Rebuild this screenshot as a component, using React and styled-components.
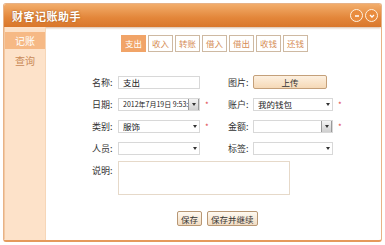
import styled, { createGlobalStyle } from "styled-components";

const GlobalStyle = createGlobalStyle`
  body {
    margin: 0;
    background: #ffffff;
    font-family: "Noto Sans CJK SC", "DejaVu Sans", sans-serif;
  }
`;

const Window = styled.div`
  margin: 3px;
  width: 379px;
  height: 239px;
  box-sizing: border-box;
  border: 1px solid #e7b287;
  border-bottom: 2px solid #e59a5c;
  border-radius: 3px;
  display: flex;
  flex-direction: column;
  overflow: hidden;
  background: #ffffff;
`;

const TitleBar = styled.div`
  height: 23px;
  flex-shrink: 0;
  display: flex;
  align-items: center;
  justify-content: space-between;
  padding: 0 3px 0 8px;
  background: linear-gradient(#f2ad6b, #e3863a 60%, #d9772b);
  box-shadow: 0 1px 2px rgba(150, 80, 20, 0.4);
`;

const Title = styled.span`
  color: #ffffff;
  font-size: 11px;
  font-weight: bold;
  letter-spacing: 0.5px;
  text-shadow: 0 0 2px #9a5016;
`;

const Controls = styled.div`
  display: flex;
  gap: 2px;
`;

const RoundButton = styled.span`
  width: 11px;
  height: 11px;
  border-radius: 50%;
  border: 1px solid #fff2e0;
  background: #e98c3e;
  display: flex;
  align-items: center;
  justify-content: center;
`;

const Body = styled.div`
  flex: 1;
  display: flex;
`;

const Sidebar = styled.div`
  width: 40px;
  flex-shrink: 0;
  background: #fde2c9;
  border-left: 1px solid #f3c9a2;
  border-right: 1px solid #f6d6b8;
  padding-top: 5px;
  display: flex;
  flex-direction: column;
  gap: 3px;
`;

const SideItem = styled.div`
  height: 17px;
  line-height: 17px;
  text-align: center;
  font-size: 10px;
  color: ${(p) => (p.active ? "#ffffff" : "#c98a58")};
  background: ${(p) => (p.active ? "#f6b985" : "transparent")};
`;

const Content = styled.div`
  flex: 1;
  display: flex;
  flex-direction: column;
  padding-top: 8px;
`;

const Tabs = styled.div`
  display: flex;
  gap: 2px;
  margin-left: 75px;
`;

const Tab = styled.div`
  width: 23px;
  height: 15px;
  line-height: 15px;
  text-align: center;
  font-size: 8.5px;
  color: ${(p) => (p.active ? "#ffffff" : "#d68d55")};
  background: ${(p) => (p.active ? "#f1a468" : "#ffffff")};
  border: 1px solid ${(p) => (p.active ? "#f1a468" : "#ceb9a2")};
`;

const Form = styled.div`
  margin-top: 19px;
  margin-left: 46px;
  display: grid;
  grid-template-columns: 26px 82px 28px 25px 80px 10px;
  grid-auto-rows: 22px;
  align-items: center;
`;

const Label = styled.span`
  font-size: 9px;
  color: #333333;
  align-self: ${(p) => (p.top ? "start" : "center")};
  padding-top: ${(p) => (p.top ? "5px" : "0")};
`;

const Field = styled.div`
  height: 13px;
  box-sizing: border-box;
  border: 1px solid #d8d8d8;
  background: #ffffff;
  display: flex;
  align-items: center;
  font-size: 8.5px;
  color: #222222;
  padding-left: 4px;
  overflow: hidden;
  white-space: nowrap;
`;

const FieldText = styled.span`
  flex: 1;
  overflow: hidden;
  font-size: ${(p) => (p.small ? "7px" : "8.5px")};
`;

const Caret = styled.span`
  width: 9px;
  flex-shrink: 0;
  display: flex;
  align-items: center;
  justify-content: center;
  &::after {
    content: "";
    border-left: 2px solid transparent;
    border-right: 2px solid transparent;
    border-top: 3px solid #333333;
  }
`;

const CaretBox = styled(Caret)`
  height: 11px;
  border: 1px solid #9a9a9a;
  border-radius: 1px;
  background: linear-gradient(#f4f4f4, #cfcfcf);
`;

const Star = styled.span`
  color: #e0424a;
  font-size: 8px;
  padding-left: 5px;
`;

const Upload = styled.button`
  width: 74px;
  height: 14px;
  padding: 0;
  border: 1px solid #c4a07a;
  border-radius: 2px;
  background: linear-gradient(#fdf0e0, #f5d9b7);
  font-family: inherit;
  font-size: 8.5px;
  color: #333333;
`;

const TextArea = styled.div`
  grid-column: 2 / 6;
  align-self: start;
  width: 172px;
  height: 34px;
  box-sizing: border-box;
  border: 1px solid #e6d9c9;
  margin-top: 2px;
`;

const Actions = styled.div`
  margin-top: 30px;
  margin-left: 131px;
  display: flex;
  gap: 5px;
`;

const ActionButton = styled.button`
  height: 15px;
  padding: 0 3px;
  border: 1px solid #b89774;
  border-radius: 2px;
  background: linear-gradient(#fffaf2, #f1dcc2);
  font-family: inherit;
  font-size: 8.5px;
  line-height: 12px;
  color: #333333;
`;

const tabs = ["支出", "收入", "转账", "借入", "借出", "收钱", "还钱"];

const App = () => {
  return (
    <>
      <GlobalStyle />
      <Window>
        <TitleBar>
          <Title>财客记账助手</Title>
          <Controls>
            <RoundButton>
              <svg width="6" height="6" viewBox="0 0 6 6">
                <path d="M1 3h4" stroke="#fff" strokeWidth="1.4" />
              </svg>
            </RoundButton>
            <RoundButton>
              <svg width="6" height="6" viewBox="0 0 6 6">
                <path d="M1 2l2 2 2-2" stroke="#fff" strokeWidth="1.3" fill="none" />
              </svg>
            </RoundButton>
          </Controls>
        </TitleBar>
        <Body>
          <Sidebar>
            <SideItem active>记账</SideItem>
            <SideItem>查询</SideItem>
          </Sidebar>
          <Content>
            <Tabs>
              {tabs.map((t, i) => (
                <Tab key={t} active={i === 0}>
                  {t}
                </Tab>
              ))}
            </Tabs>
            <Form>
              <Label>名称:</Label>
              <Field>支出</Field>
              <span />
              <Label>图片:</Label>
              <Upload>上传</Upload>
              <span />

              <Label>日期:</Label>
              <Field>
                <FieldText small>2012年7月19日 9:53:</FieldText>
                <CaretBox />
              </Field>
              <Star>*</Star>
              <Label>账户:</Label>
              <Field>
                <FieldText>我的钱包</FieldText>
                <Caret />
              </Field>
              <Star>*</Star>

              <Label>类别:</Label>
              <Field>
                <FieldText>服饰</FieldText>
                <Caret />
              </Field>
              <Star>*</Star>
              <Label>金额:</Label>
              <Field>
                <FieldText />
                <CaretBox />
              </Field>
              <Star>*</Star>

              <Label>人员:</Label>
              <Field>
                <FieldText />
                <Caret />
              </Field>
              <span />
              <Label>标签:</Label>
              <Field>
                <FieldText />
                <Caret />
              </Field>
              <span />

              <Label top>说明:</Label>
              <TextArea />
            </Form>
            <Actions>
              <ActionButton>保存</ActionButton>
              <ActionButton>保存并继续</ActionButton>
            </Actions>
          </Content>
        </Body>
      </Window>
    </>
  );
};

export default App;
